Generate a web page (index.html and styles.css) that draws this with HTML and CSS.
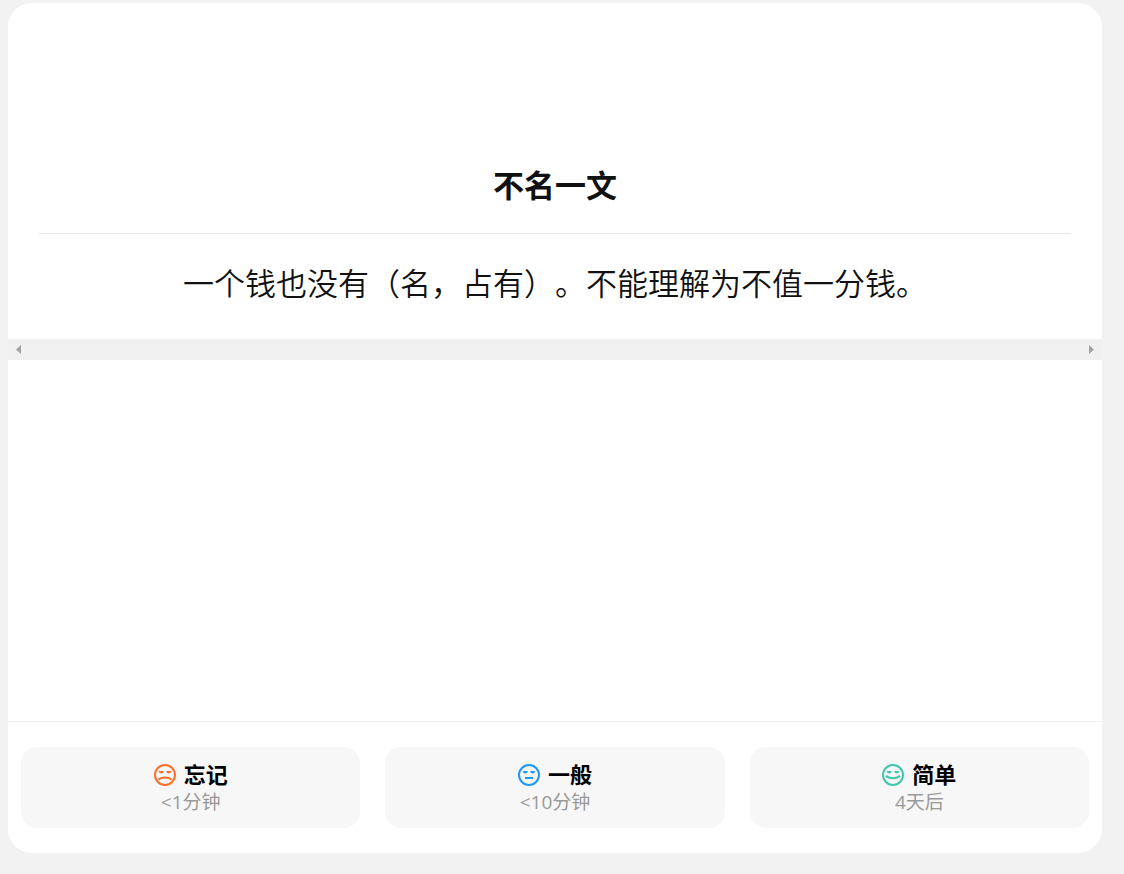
FILE: index.html
```html
<!DOCTYPE html>
<html lang="zh-CN">
<head>
    <meta charset="UTF-8">
    <meta name="viewport" content="width=device-width, initial-scale=1.0">
    <title>不名一文</title>
    <link rel="stylesheet" href="styles.css">
</head>
<body>
    <main class="card">
        <section class="card-content">
            <h1 class="card-front">不名一文</h1>
            <hr class="divider">
            <p class="card-back">一个钱也没有（名，占有）。不能理解为不值一分钱。</p>
        </section>
        <div class="scroll-bar">
            <button class="scroll-arrow" type="button" aria-label="向左滚动">
                <svg width="5" height="9" viewBox="0 0 5 9"><path d="M5 0v9L0 4.5z" fill="#a3a3a3"/></svg>
            </button>
            <button class="scroll-arrow" type="button" aria-label="向右滚动">
                <svg width="5" height="9" viewBox="0 0 5 9"><path d="M0 0v9l5-4.5z" fill="#a3a3a3"/></svg>
            </button>
        </div>
        <footer class="answers">
            <button class="answer" type="button">
                <span class="answer-title">
                    <svg class="face forget" viewBox="0 0 22 22">
                        <circle cx="11" cy="11" r="10"/>
                        <path class="eyes" d="M4.5 7h5.2q-.4 2.6-2.4 2.6T4.5 7zM12.3 7h5.2q-.8 2.6-2.8 2.6T12.3 7z"/>
                        <path d="M4.5 15.7c2.5-3 10.5-3 13 0"/>
                    </svg>
                    忘记
                </span>
                <span class="answer-time">&lt;1分钟</span>
            </button>
            <button class="answer" type="button">
                <span class="answer-title">
                    <svg class="face normal" viewBox="0 0 22 22">
                        <circle cx="11" cy="11" r="10"/>
                        <path class="eyes" d="M4.8 7h5q-.4 2.6-2.4 2.6T4.8 7zM12.2 7h5q-.6 2.6-2.6 2.6T12.2 7z"/>
                        <path d="M7 14h8"/>
                    </svg>
                    一般
                </span>
                <span class="answer-time">&lt;10分钟</span>
            </button>
            <button class="answer" type="button">
                <span class="answer-title">
                    <svg class="face easy" viewBox="0 0 22 22">
                        <circle cx="11" cy="11" r="10"/>
                        <path class="eyes" d="M4.5 7h5.2q-.4 2.6-2.4 2.6T4.5 7zM12.3 7h5.2q-.8 2.6-2.8 2.6T12.3 7z"/>
                        <path d="M4 11.8c3 3.2 11 3.2 14 0"/>
                    </svg>
                    简单
                </span>
                <span class="answer-time">4天后</span>
            </button>
        </footer>
    </main>
</body>
</html>
```

FILE: styles.css
```css
* {
  box-sizing: border-box;
}

body {
  margin: 0;
  padding: 3px 22px 21px 8px;
  background-color: #f2f2f2;
  color: #111;
  font-family: "Open Sans", "Noto Sans CJK SC", sans-serif;
}

button {
  border: none;
  font-family: inherit;
  cursor: pointer;
}

.card {
  display: flex;
  flex-direction: column;
  min-height: calc(100vh - 24px);
  background-color: #fff;
  border-radius: 24px;
  overflow: hidden;
}

.card-content {
  padding: 158px 31px 32px;
  text-align: center;
}

.card-front {
  margin: 0;
  font-size: 31px;
  line-height: 48px;
}

.divider {
  height: 1px;
  margin: 24px 0 25px;
  border: none;
  background-color: #e8e8e8;
}

.card-back {
  margin: 0;
  font-size: 31px;
  font-weight: 350;
  line-height: 48px;
  text-spacing-trim: space-all;
}

.scroll-bar {
  display: flex;
  justify-content: space-between;
  height: 21px;
  background-color: #f0f0f0;
}

.scroll-arrow {
  display: flex;
  align-items: center;
  padding: 0 8px;
  background: none;
}

.answers {
  display: grid;
  grid-template-columns: repeat(3, 1fr);
  gap: 25px;
  margin-top: auto;
  padding: 25px 13px;
  border-top: 1px solid #f2f2f2;
}

.answer {
  display: flex;
  flex-direction: column;
  align-items: center;
  padding: 13px 0;
  border-radius: 16px;
  background-color: #f7f7f7;
}

.answer:hover {
  background-color: #f0f0f0;
}

.answer-title {
  display: flex;
  align-items: center;
  gap: 8px;
  color: #000;
  font-size: 22px;
  font-weight: bold;
  line-height: 29px;
}

.answer-time {
  color: #999;
  font-size: 19px;
  line-height: 26px;
}

.face {
  width: 22px;
  height: 22px;
  fill: none;
  stroke-width: 2;
}

.eyes {
  stroke: none;
}

.forget {
  stroke: #ff6f2c;
}

.forget .eyes {
  fill: #ff6f2c;
}

.normal {
  stroke: #2196f3;
}

.normal .eyes {
  fill: #2196f3;
}

.easy {
  stroke: #43c6ac;
}

.easy .eyes {
  fill: #43c6ac;
}
```
